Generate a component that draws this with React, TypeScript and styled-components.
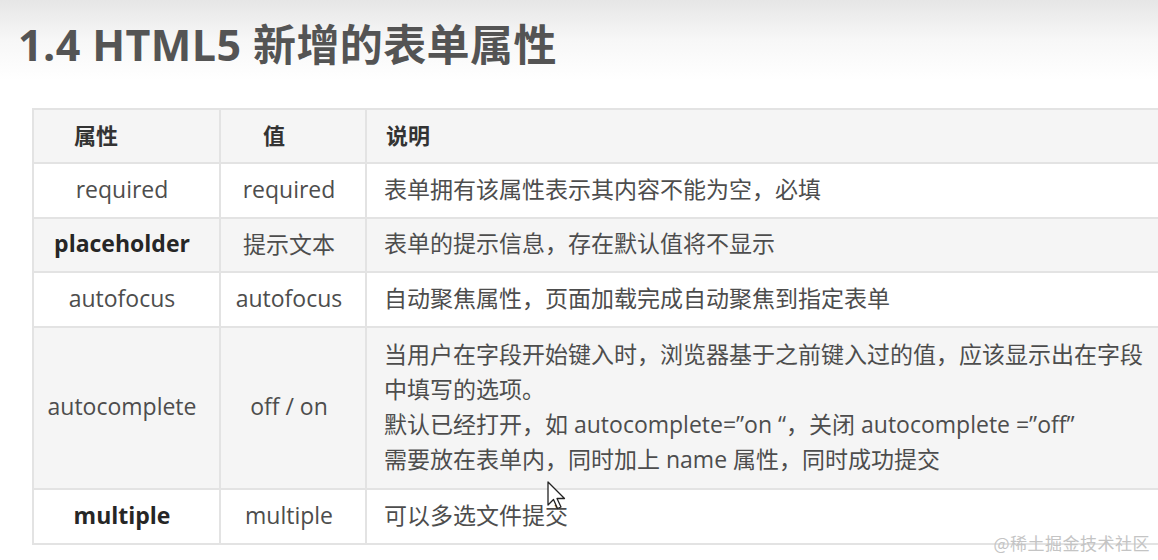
import styled, { createGlobalStyle } from 'styled-components';

const GlobalStyle = createGlobalStyle`
  html, body {
    margin: 0;
    padding: 0;
    background: #ffffff;
  }
  body {
    font-family: "Open Sans", "Noto Sans CJK SC", sans-serif;
    overflow: hidden;
  }
`;

const Slide = styled.div`
  position: relative;
  width: 1158px;
  height: 560px;
  overflow: hidden;
  background: linear-gradient(to bottom, #e6e6e6 0px, #f7f7f7 40px, #ffffff 80px);
`;

const Title = styled.h1`
  margin: 0;
  padding: 17px 0 0 18px;
  height: 90px;
  box-sizing: border-box;
  font-family: "Open Sans", "Noto Sans CJK SC", sans-serif;
  font-size: 43px;
  font-weight: 700;
  line-height: 56px;
  color: #545454;
  letter-spacing: 0.4px;
`;

const TableWrap = styled.div`
  padding: 18px 0 0 32px;
`;

const Table = styled.table`
  border-collapse: collapse;
  width: 1160px;
  table-layout: fixed;
  font-size: 23px;
  color: #4d4d4d;
`;

const Row = styled.tr<{ $shade?: boolean; $h: number }>`
  height: ${(p) => p.$h}px;
  background: ${(p) => (p.$shade ? '#f5f5f5' : '#ffffff')};
`;

const HeadCell = styled.th<{ $pl: number }>`
  border: 2px solid #e3e3e3;
  text-align: left;
  padding: 0 0 5px ${(p) => p.$pl}px;
  font-weight: 700;
  font-size: 22px;
  color: #333333;
`;

const NameCell = styled.td<{ $bold?: boolean }>`
  border: 2px solid #e3e3e3;
  text-align: center;
  padding: 0 9px 4px 0;
  font-weight: ${(p) => (p.$bold ? 700 : 400)};
  color: ${(p) => (p.$bold ? '#262626' : '#4d4d4d')};
`;

const ValueCell = styled.td`
  border: 2px solid #e3e3e3;
  text-align: center;
  padding: 0 8px 4px 0;
`;

const DescCell = styled.td`
  border: 2px solid #e3e3e3;
  padding: 0 0 3px 17px;
  line-height: 35px;
`;

const Watermark = styled.div`
  position: absolute;
  right: 8px;
  bottom: 5px;
  font-family: "Noto Sans CJK SC", sans-serif;
  font-size: 17px;
  color: #c4c4c4;
  letter-spacing: 0.5px;
`;

const Cursor = styled.svg`
  position: absolute;
  left: 547px;
  top: 481px;
`;

const rows = [
  { name: 'required', value: 'required', desc: ['表单拥有该属性表示其内容不能为空，必填'], h: 55 },
  { name: 'placeholder', value: '提示文本', desc: ['表单的提示信息，存在默认值将不显示'], h: 54, bold: true, shade: true },
  { name: 'autofocus', value: 'autofocus', desc: ['自动聚焦属性，页面加载完成自动聚焦到指定表单'], h: 55 },
  {
    name: 'autocomplete',
    value: 'off / on',
    desc: [
      '当用户在字段开始键入时，浏览器基于之前键入过的值，应该显示出在字段',
      '中填写的选项。',
      '默认已经打开，如 autocomplete=”on “，关闭 autocomplete =”off”',
      '需要放在表单内，同时加上 name 属性，同时成功提交',
    ],
    h: 162,
    shade: true,
  },
  { name: 'multiple', value: 'multiple', desc: ['可以多选文件提交'], h: 55, bold: true },
];

export default function App() {
  return (
    <>
      <GlobalStyle />
      <Slide>
        <Title>1.4 HTML5 新增的表单属性</Title>
        <TableWrap>
          <Table>
            <colgroup>
              <col style={{ width: 187 }} />
              <col style={{ width: 146 }} />
              <col />
            </colgroup>
            <thead>
              <Row $shade $h={54}>
                <HeadCell $pl={40}>属性</HeadCell>
                <HeadCell $pl={42}>值</HeadCell>
                <HeadCell $pl={19}>说明</HeadCell>
              </Row>
            </thead>
            <tbody>
              {rows.map((r) => (
                <Row key={r.name} $shade={r.shade} $h={r.h}>
                  <NameCell $bold={r.bold}>{r.name}</NameCell>
                  <ValueCell>{r.value}</ValueCell>
                  <DescCell>
                    {r.desc.map((line) => (
                      <div key={line}>{line}</div>
                    ))}
                  </DescCell>
                </Row>
              ))}
            </tbody>
          </Table>
        </TableWrap>
        <Cursor width="20" height="30" viewBox="0 0 20 30">
          <path d="M1 1 L1 24 L6.5 18.5 L10.5 27.5 L14 26 L10 17.5 L17.5 17.5 Z" fill="#ffffff" stroke="#222" strokeWidth="1.3" strokeLinejoin="round" />
        </Cursor>
        <Watermark>@稀土掘金技术社区</Watermark>
      </Slide>
    </>
  );
}
